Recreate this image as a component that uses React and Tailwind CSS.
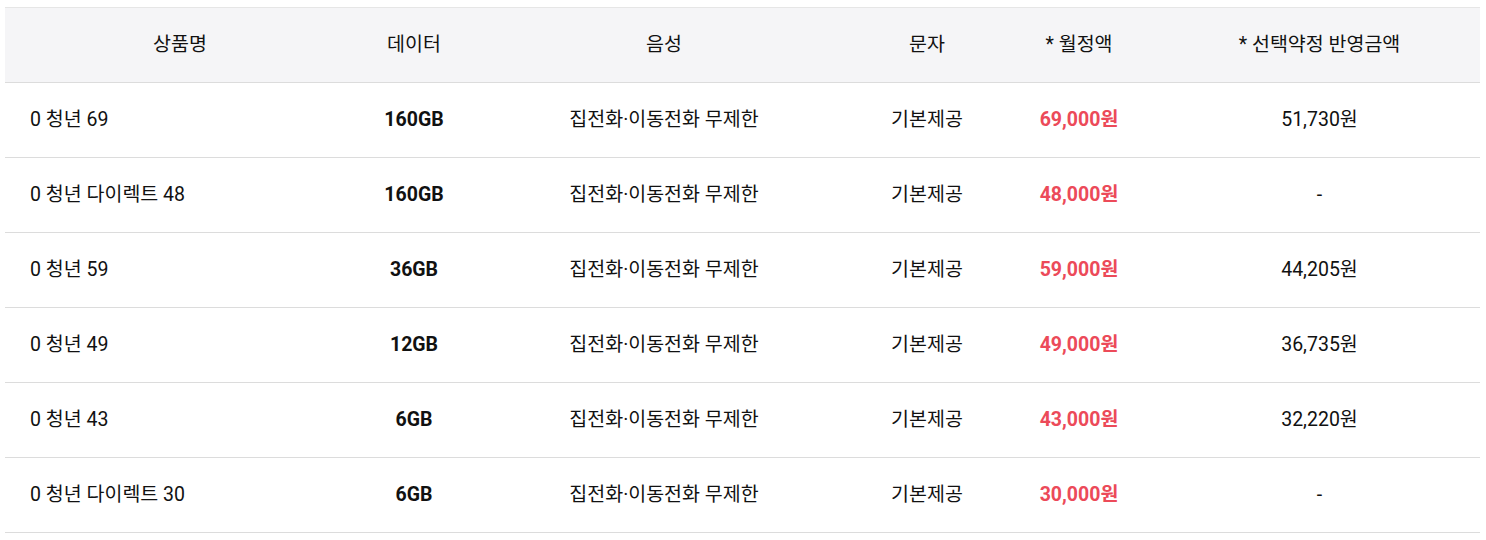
import React from 'react';

const rows = [
  { name: '0 청년 69', data: '160GB', price: '69,000원', discount: '51,730원' },
  { name: '0 청년 다이렉트 48', data: '160GB', price: '48,000원', discount: '-' },
  { name: '0 청년 59', data: '36GB', price: '59,000원', discount: '44,205원' },
  { name: '0 청년 49', data: '12GB', price: '49,000원', discount: '36,735원' },
  { name: '0 청년 43', data: '6GB', price: '43,000원', discount: '32,220원' },
  { name: '0 청년 다이렉트 30', data: '6GB', price: '30,000원', discount: '-' },
];

const cols = 'grid grid-cols-[350px_118px_382px_144px_160px_321px]';

const App = () => {
  return (
    <div className="bg-white w-[1486px] h-[540px] pt-[7px] pl-[5px] font-['Roboto','Noto_Sans_CJK_KR',sans-serif] text-[19.5px] text-[#111]">
      <div className="w-[1475px] border-t border-[#e6e6e6]">
        <div className={`${cols} h-[75px] items-center bg-[#f5f5f7] border-b border-[#dcdcdc] text-center`}>
          <div>상품명</div>
          <div>데이터</div>
          <div>음성</div>
          <div>문자</div>
          <div>* 월정액</div>
          <div>* 선택약정 반영금액</div>
        </div>
        {rows.map((row) => (
          <div key={row.name} className={`${cols} h-[75px] items-center border-b border-[#dcdcdc] text-center`}>
            <div className="text-left pl-[25px]">{row.name}</div>
            <div className="font-bold">{row.data}</div>
            <div>집전화·이동전화 무제한</div>
            <div>기본제공</div>
            <div className="font-bold text-[#ec4a59]">{row.price}</div>
            <div>{row.discount}</div>
          </div>
        ))}
      </div>
    </div>
  );
};

export default App;
